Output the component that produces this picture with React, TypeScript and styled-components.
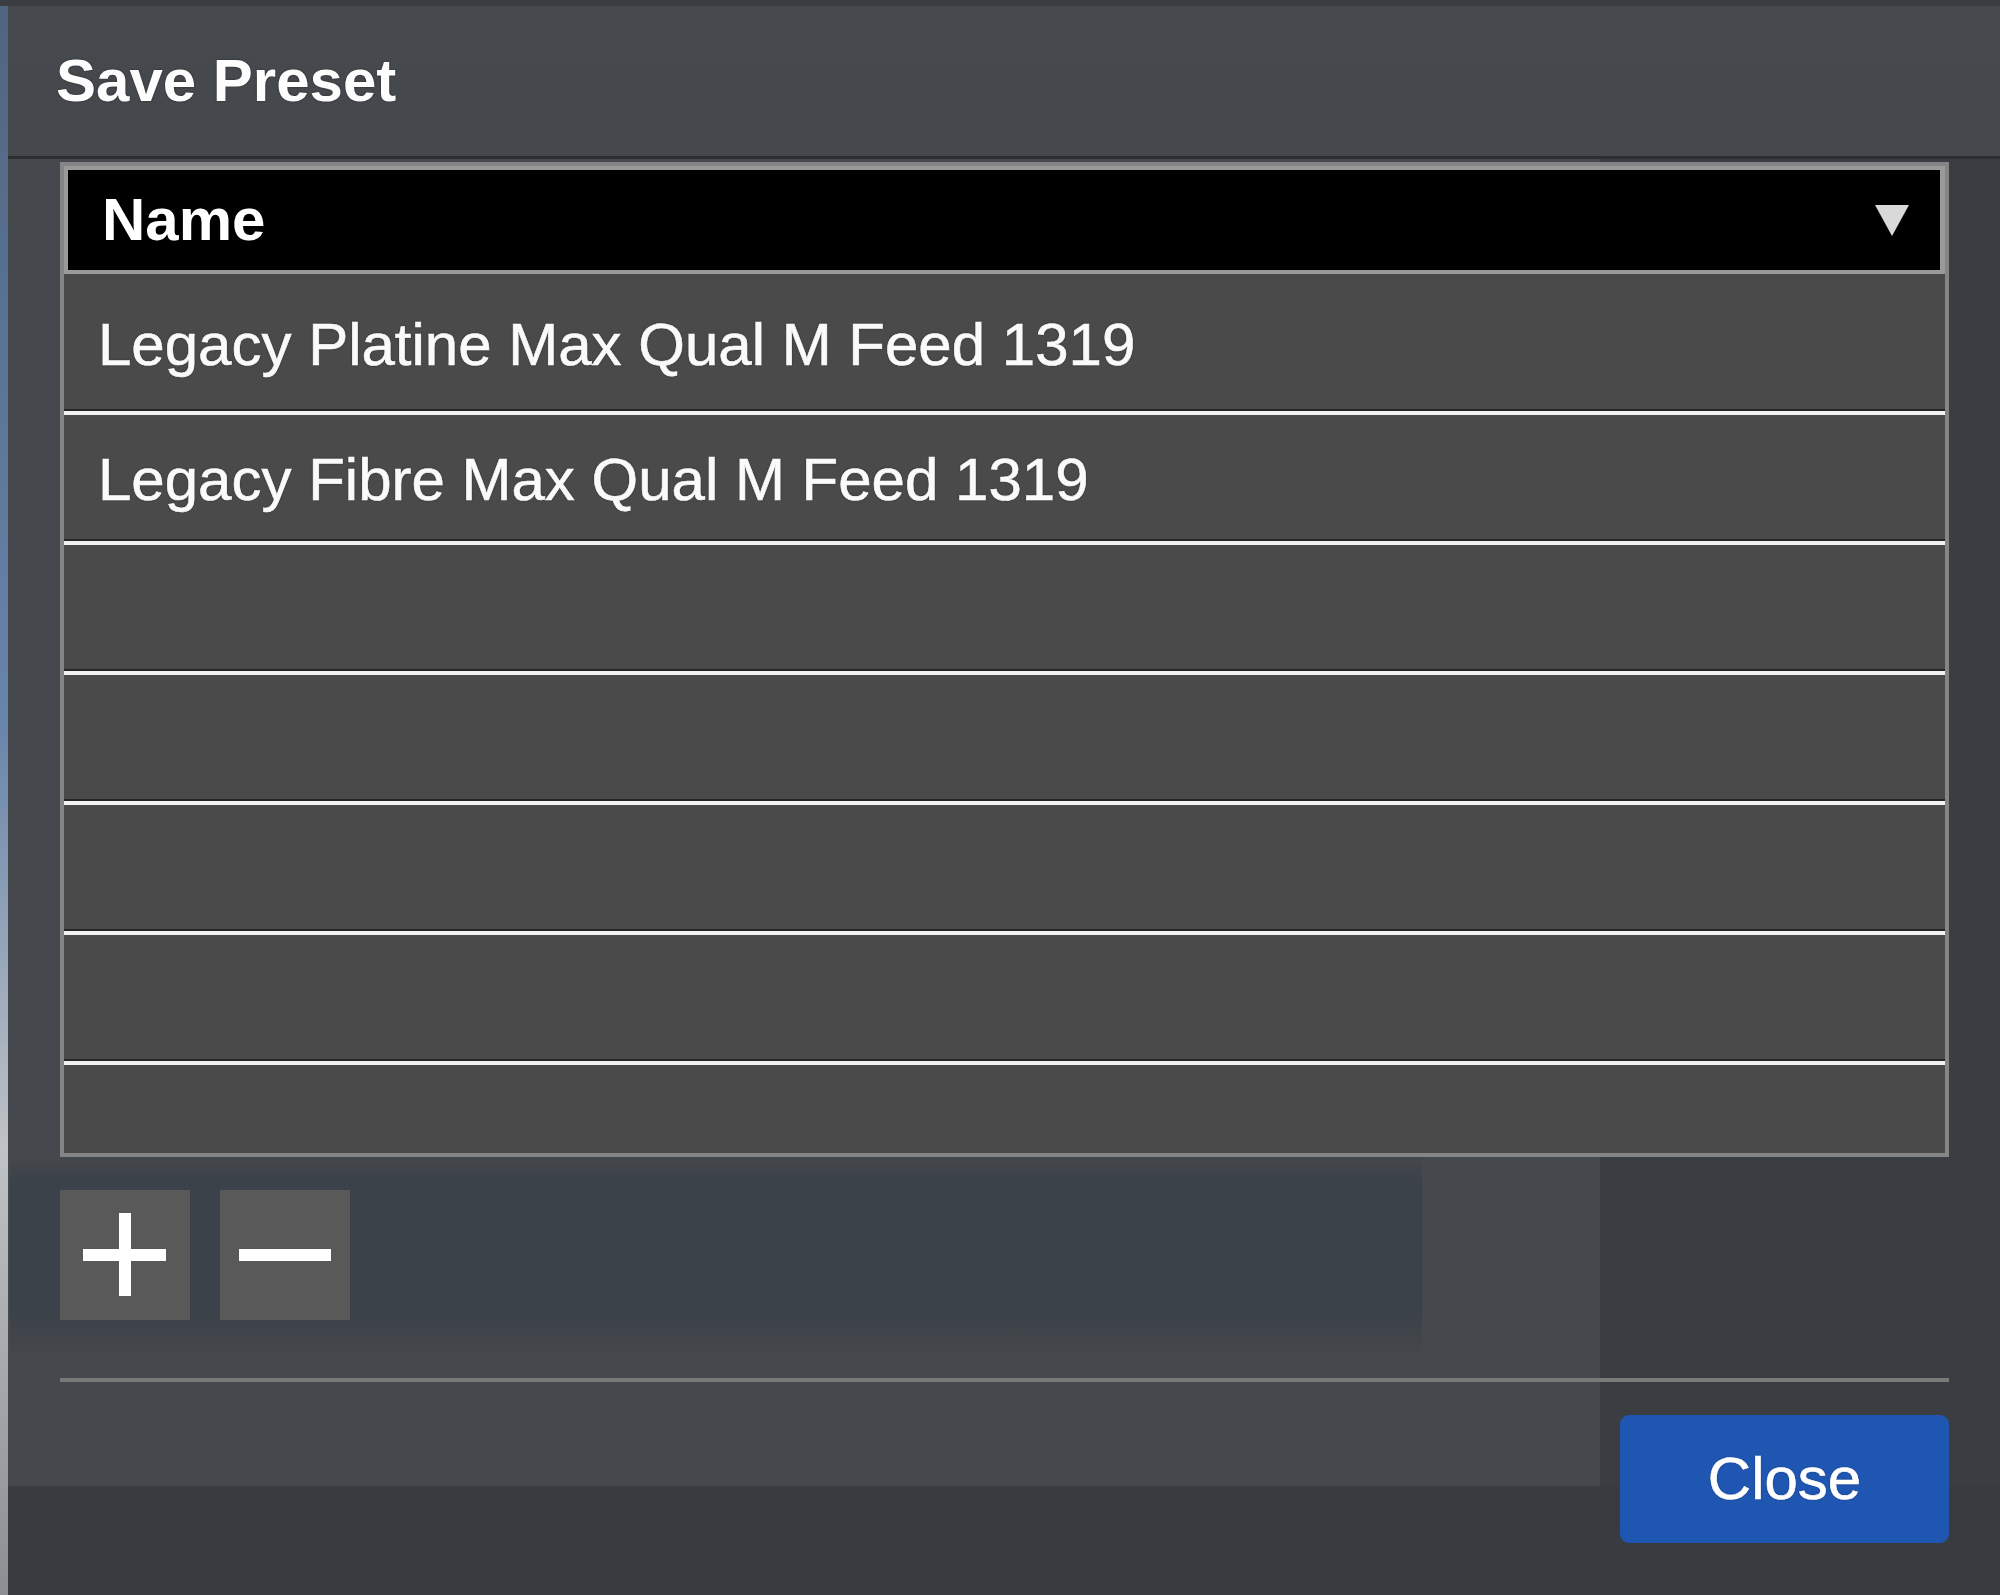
import React from "react";
import styled, { createGlobalStyle } from "styled-components";

const GlobalStyle = createGlobalStyle`
  html, body {
    margin: 0;
    padding: 0;
    background: #3b3d42;
  }
  body {
    font-family: "Liberation Sans", Arial, Helvetica, sans-serif;
    color: #fff;
  }
`;

const Screen = styled.div`
  width: 2000px;
  height: 1595px;
  overflow: hidden;
  display: flex;
  flex-direction: column;
  padding: 6px 0 0 8px;
  box-sizing: border-box;
  background:
    linear-gradient(#3b3d42, #3b3d42) top left / 100% 6px no-repeat,
    linear-gradient(to bottom, #4f6480 0%, #6784aa 45%, #bfc2c6 72%, #8c8e92 100%);
`;

const Dialog = styled.div`
  flex: 1;
  display: flex;
  flex-direction: column;
  background:
    linear-gradient(#383b3f, #383b3f) left bottom / 100% 109px no-repeat,
    linear-gradient(#3a3d41, #3a3d41) right top / 400px 100% no-repeat,
    linear-gradient(to bottom, rgba(60, 66, 74, 0) 0%, #3c424a 12%, #3c4249 80%, rgba(60, 66, 74, 0) 100%) 2px 1150px / 1412px 200px no-repeat,
    #45484c;
`;

const Header = styled.div`
  height: 150px;
  display: flex;
  align-items: center;
  padding-left: 48px;
  background: linear-gradient(to bottom, #46494d, #44474b);
  border-bottom: 3px solid #2b2d30;
  flex-shrink: 0;
`;

const Title = styled.h1`
  margin: 0;
  font-size: 60px;
  line-height: 60px;
  font-weight: 700;
  color: #fdfdfd;
  text-shadow: 0 0 2px rgba(0, 0, 0, 0.5);
`;

const Body = styled.div`
  display: flex;
  flex-direction: column;
  padding: 3px 51px 0 52px;
`;

const Table = styled.div`
  height: 995px;
  box-sizing: border-box;
  border: 4px solid #858585;
  background: #4a4a4a;
  display: flex;
  flex-direction: column;
  overflow: hidden;
`;

const HeadRow = styled.div`
  height: 108px;
  box-sizing: border-box;
  border: 4px solid #9a9a9a;
  border-right-width: 5px;
  background: #000;
  display: flex;
  align-items: center;
  justify-content: space-between;
  padding: 0 30px 0 34px;
  flex-shrink: 0;
`;

const HeadLabel = styled.span`
  font-size: 60px;
  font-weight: 700;
  line-height: 60px;
  color: #fff;
`;

const Row = styled.div<{ $first?: boolean; $last?: boolean }>`
  height: ${({ $first }) => ($first ? "141px" : "130px")};
  flex-shrink: 0;
  ${({ $last }) => ($last ? "flex: 1;" : "")}
  box-sizing: border-box;
  display: flex;
  align-items: center;
  padding: 4px 0 0 34px;
  background: #4a4a4a;
  box-shadow: ${({ $last }) => ($last ? "none" : "inset 0 -2px 0 #262626")};
  border-bottom: ${({ $last }) => ($last ? "none" : "4px solid #f2f2f2")};
  font-size: 60px;
  line-height: 60px;
  color: #fafafa;
  -webkit-text-stroke: 0.6px #fafafa;
  text-shadow: 0 0 2px rgba(0, 0, 0, 0.6);
`;

const Tools = styled.div`
  display: flex;
  gap: 30px;
  margin-top: 33px;
`;

const SquareButton = styled.button`
  width: 130px;
  height: 130px;
  padding: 0;
  border: none;
  background: #595959;
  display: flex;
  align-items: center;
  justify-content: center;
  cursor: pointer;
`;

const Divider = styled.div`
  height: 4px;
  background: #7a7a7a;
  margin-top: 58px;
`;

const Footer = styled.div`
  display: flex;
  justify-content: flex-end;
  margin-top: 33px;
`;

const CloseButton = styled.button`
  width: 329px;
  height: 128px;
  border: none;
  border-radius: 9px;
  background: #1f56b2;
  color: #fff;
  font-family: "Liberation Sans", Arial, sans-serif;
  font-size: 60px;
  line-height: 60px;
  padding: 0;
  cursor: pointer;
  -webkit-text-stroke: 0.6px #fff;
  text-shadow: 0 0 2px rgba(0, 0, 0, 0.4);
`;

const presets = [
  "Legacy Platine Max Qual M Feed 1319",
  "Legacy Fibre Max Qual M Feed 1319",
  "",
  "",
  "",
  "",
  "",
];

const App = () => {
  return (
    <>
      <GlobalStyle />
      <Screen>
        <Dialog>
          <Header>
            <Title>Save Preset</Title>
          </Header>
          <Body>
            <Table>
              <HeadRow>
                <HeadLabel>Name</HeadLabel>
                <svg width="36" height="34" viewBox="0 0 36 34">
                  <polygon points="1,2 35,2 18,33" fill="#d9d9d9" />
                </svg>
              </HeadRow>
              {presets.map((name, i) => (
                <Row key={i} $first={i === 0} $last={i === presets.length - 1}>
                  {name}
                </Row>
              ))}
            </Table>
            <Tools>
              <SquareButton aria-label="Add preset">
                <svg width="130" height="130" viewBox="0 0 130 130">
                  <rect x="23" y="59" width="83" height="12" fill="#fff" />
                  <rect x="59" y="23" width="12" height="83" fill="#fff" />
                </svg>
              </SquareButton>
              <SquareButton aria-label="Remove preset">
                <svg width="130" height="130" viewBox="0 0 130 130">
                  <rect x="19" y="59" width="92" height="12" fill="#fff" />
                </svg>
              </SquareButton>
            </Tools>
            <Divider />
            <Footer>
              <CloseButton>Close</CloseButton>
            </Footer>
          </Body>
        </Dialog>
      </Screen>
    </>
  );
};

export default App;
